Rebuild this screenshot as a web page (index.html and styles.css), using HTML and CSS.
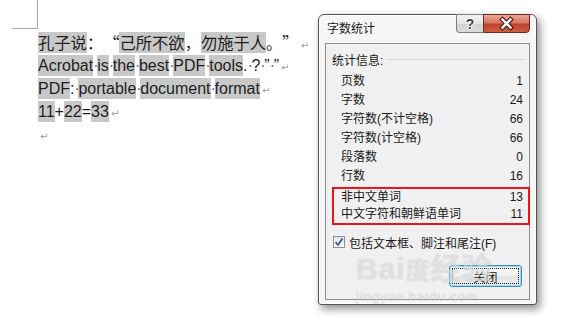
FILE: index.html
```html
<!DOCTYPE html>
<html lang="zh-CN">
<head>
  <meta charset="UTF-8">
  <meta name="viewport" content="width=device-width, initial-scale=1.0">
  <title>字数统计</title>
  <link rel="stylesheet" href="styles.css">
</head>
<body>
  <div class="desk">
    <div class="doc">
      <p class="ln cjk"><span class="hl">孔子说</span>：<span class="q ql">“</span><span class="hl">己所不欲</span>，<span class="hl">勿施于人</span>。<span class="q qr">”</span><span class="pm">↵</span></p>
      <p class="ln"><span class="hl">Acrobat</span><span class="sp">·</span><span class="hl">is</span><span class="sp">·</span><span class="hl">the</span><span class="sp">·</span><span class="hl">best</span><span class="sp">·</span><span class="hl">PDF</span><span class="sp">·</span><span class="hl">tools</span>.<span class="sp">·</span>?<span class="sp">·</span>”<span class="sp">·</span>”<span class="pm">↵</span></p>
      <p class="ln"><span class="hl">PDF</span>:<span class="sp">·</span><span class="hl">portable</span><span class="sp">·</span><span class="hl">document</span><span class="sp">·</span><span class="hl">format</span><span class="pm">↵</span></p>
      <p class="ln"><span class="hl">11</span>+<span class="hl">22</span>=<span class="hl">33</span><span class="pm">↵</span></p>
      <p class="ln"><span class="pm">↵</span></p>
    </div>

    <div class="dlg">
      <div class="tbar">
        <span class="ttl">字数统计</span>
        <div class="tbtns">
          <span class="help">?</span>
          <span class="close">
            <svg width="45" height="17" viewBox="0 0 45 17">
              <path d="M18.5 4.5 L26.5 12.5 M26.5 4.5 L18.5 12.5" stroke="#4a1f18" stroke-width="4.6" stroke-linecap="square"/>
              <path d="M18.5 4.5 L26.5 12.5 M26.5 4.5 L18.5 12.5" stroke="#fff" stroke-width="2.4" stroke-linecap="square"/>
            </svg>
          </span>
        </div>
      </div>

      <div class="client">
        <div class="grp"><span>统计信息:</span><i class="rule"></i></div>
        <div class="rows">
          <div class="row"><span>页数</span><span>1</span></div>
          <div class="row"><span>字数</span><span>24</span></div>
          <div class="row"><span>字符数(不计空格)</span><span>66</span></div>
          <div class="row"><span>字符数(计空格)</span><span>66</span></div>
          <div class="row"><span>段落数</span><span>0</span></div>
          <div class="row"><span>行数</span><span>16</span></div>
        </div>
        <div class="mark">
          <div class="row"><span>非中文单词</span><span>13</span></div>
          <div class="row"><span>中文字符和朝鲜语单词</span><span>11</span></div>
        </div>
        <div class="chk">
          <span class="box">
            <svg width="10" height="10" viewBox="0 0 10 10">
              <path d="M1.5 5 L4 8 L8.5 1.5" fill="none" stroke="#3d5a98" stroke-width="1.8"/>
            </svg>
          </span>
          <span>包括文本框、脚注和尾注(F)</span>
        </div>
        <div class="acts">
          <button class="btn"><span class="focus">关闭</span></button>
        </div>
      </div>
    </div>

    <div class="wm">
      <span class="wm-big">Bai<span class="paw">度</span>经验</span>
      <span class="wm-url">jingyan.baidu.com</span>
    </div>
  </div>
</body>
</html>
```

FILE: styles.css
```css
body {
  margin: 0;
  background: #fff;
  color: #1e1e1e;
  font-family: "Liberation Sans", "Noto Sans CJK SC", sans-serif;
}
.desk {
  position: relative;
  width: 561px;
  height: 322px;
  overflow: hidden;
}

/* document */
.doc {
  position: relative;
  padding: 31px 0 0 38px;
}
.doc::before {
  content: "";
  position: absolute;
  left: 12px;
  top: 0;
  width: 25px;
  height: 28px;
  border-right: 1px solid #a9a9a9;
  border-bottom: 1px solid #a9a9a9;
}
.ln {
  margin: 0;
  height: 23px;
  line-height: 23px;
  font-size: 16px;
  white-space: nowrap;
}
.ln.cjk {
  font-family: "Noto Sans CJK SC", sans-serif;
  font-size: 16.3px;
}
.q {
  display: inline-block;
  width: 1em;
}
.ql {
  text-align: right;
  padding-right: 1px;
  box-sizing: border-box;
}
.qr {
  text-align: left;
}
.hl {
  display: inline-block;
  background: #c8c8c8;
  line-height: 21px;
}
.sp {
  display: inline-block;
  width: 4px;
  text-align: center;
  color: #6a6a6a;
}
.pm {
  color: #9c9c9c;
  font-family: "DejaVu Sans", sans-serif;
  font-size: 10px;
  margin-left: 2px;
}

/* dialog window */
.dlg {
  position: absolute;
  left: 318px;
  top: 14px;
  width: 219px;
  height: 291px;
  box-sizing: border-box;
  border: 1px solid #555;
  border-radius: 6px 6px 3px 3px;
  background: #f6f6f6;
  box-shadow: 3px 4px 8px rgba(0,0,0,0.45), inset 0 0 0 1px #fff;
  display: flex;
  flex-direction: column;
  font-size: 12px;
  color: #1a1a1a;
}
.tbar {
  height: 28px;
  display: flex;
  justify-content: space-between;
  align-items: flex-start;
  padding: 0 6px 0 8px;
}
.ttl {
  padding-top: 6px;
  line-height: 16px;
}
.tbtns {
  display: flex;
  margin-top: -1px;
}
.help, .close {
  height: 17px;
  display: flex;
  align-items: center;
  justify-content: center;
}
.help {
  width: 26px;
  border: 1px solid #7d7d7d;
  border-right: none;
  border-radius: 0 0 0 4px;
  background: linear-gradient(#f4f4f4, #e3e3e3 50%, #d0d0d0 51%, #dcdcdc);
  font-weight: bold;
  font-size: 14px;
  color: #39414b;
  text-shadow: 1px 0 0 #fff, -1px 0 0 #fff, 0 1px 0 #fff, 0 -1px 0 #fff;
}
.close {
  width: 45px;
  border: 1px solid #6b2a22;
  border-radius: 0 0 4px 0;
  background: linear-gradient(#e9a997, #d57661 45%, #c2412c 55%, #cd5d45);
}
.client {
  flex: 1;
  margin: 0 6px 4px;
  border: 1px solid #8f8f8f;
  background: #f0f0f0;
  padding-top: 6px;
}
.grp {
  display: flex;
  align-items: center;
  height: 18px;
  padding-left: 6px;
  margin-right: 5px;
}
.rule {
  flex: 1;
  height: 1px;
  margin-left: 4px;
  background: #cdd7e0;
}
.rows {
  margin-top: 4px;
}
.row {
  display: flex;
  justify-content: space-between;
  height: 19px;
  line-height: 19px;
  padding: 0 6px 0 15px;
}
.mark {
  margin: 1px -1px 0 6px;
  border: 2px solid #e8161b;
}
.mark .row {
  height: 17px;
  line-height: 17px;
  padding: 0 5px 0 7px;
}
.chk {
  display: flex;
  align-items: center;
  gap: 4px;
  height: 18px;
  margin-top: 8px;
  padding-left: 7px;
}
.box {
  width: 10px;
  height: 10px;
  border: 1px solid #8e8f8f;
  background: linear-gradient(#e4e4e4, #fbfbfb);
  display: flex;
  align-items: center;
  justify-content: center;
}
.acts {
  display: flex;
  justify-content: flex-end;
  margin-top: 14px;
  padding-right: 7px;
}
.btn {
  width: 73px;
  height: 22px;
  padding: 2px;
  border: 1px solid #3d8fc2;
  border-radius: 3px;
  background: linear-gradient(#fdfdfd, #f0f0f0 50%, #e4e4e4 51%, #ececec);
  box-shadow: inset 0 0 0 1px #8fdcf7;
  font: 12px "Liberation Sans", "Noto Sans CJK SC", sans-serif;
  color: #1a1a1a;
  display: flex;
}
.focus {
  flex: 1;
  border: 1px dotted #222;
  display: flex;
  align-items: center;
  justify-content: center;
}

/* watermark */
.wm {
  position: absolute;
  left: 356px;
  top: 250px;
  display: flex;
  flex-direction: column;
  pointer-events: none;
}
.wm-big {
  font-size: 30px;
  font-weight: bold;
  line-height: 38px;
  color: rgba(255,255,255,0.55);
  text-shadow: 0 0 1px rgba(90,90,90,0.35);
  letter-spacing: 1px;
}
.paw {
  font-size: 24px;
}
.wm-url {
  font-size: 13px;
  line-height: 14px;
  letter-spacing: 1px;
  color: rgba(255,255,255,0.5);
  text-shadow: 0 0 1px rgba(90,90,90,0.35);
}
```
